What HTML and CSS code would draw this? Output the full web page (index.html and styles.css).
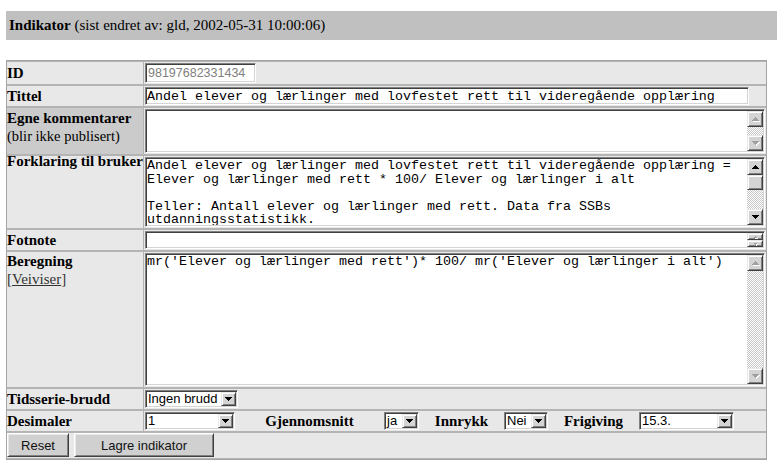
FILE: index.html
```html
<!DOCTYPE html>
<html lang="no">
<head>
<meta charset="utf-8">
<title>Indikator</title>
<link rel="stylesheet" href="styles.css">
</head>
<body>
<div class="titlebar"><b>Indikator</b> (sist endret av: gld, 2002-05-31 10:00:06)</div>
<form class="form">
<table class="grid">
  <colgroup><col class="c-label"><col class="c-field"></colgroup>
  <tr>
    <th>ID</th>
    <td><input class="txt txt-id" value="98197682331434" readonly></td>
  </tr>
  <tr>
    <th>Tittel</th>
    <td><input class="txt txt-title" value="Andel elever og lærlinger med lovfestet rett til videregående opplæring"></td>
  </tr>
  <tr>
    <th class="th-top th-dark">Egne kommentarer<br><span class="note">(blir ikke publisert)</span></th>
    <td>
      <div class="area h-egne">
        <textarea class="area-text"></textarea>
        <div class="sb sb-off">
          <span class="sb-btn"><svg class="arr" width="7" height="4" viewBox="0 0 7 4"><path d="M3 0h1v1h1v1h1v1h1v1H0V3h1V2h1V1h1z"/></svg></span>
          <span class="sb-track"></span>
          <span class="sb-btn"><svg class="arr" width="7" height="4" viewBox="0 0 7 4"><path d="M0 0h7v1H6v1H5v1H4v1H3V3H2V2H1V1H0z"/></svg></span>
        </div>
      </div>
    </td>
  </tr>
  <tr>
    <th class="th-top th-tight">Forklaring til bruker</th>
    <td>
      <div class="area h-forkl">
        <textarea class="area-text">Andel elever og lærlinger med lovfestet rett til videregående opplæring =
Elever og lærlinger med rett * 100/ Elever og lærlinger i alt

Teller: Antall elever og lærlinger med rett. Data fra SSBs
utdanningsstatistikk.</textarea>
        <div class="sb">
          <span class="sb-btn"><svg class="arr" width="7" height="4" viewBox="0 0 7 4"><path d="M3 0h1v1h1v1h1v1h1v1H0V3h1V2h1V1h1z"/></svg></span>
          <span class="sb-btn sb-thumb"></span>
          <span class="sb-track"></span>
          <span class="sb-btn"><svg class="arr" width="7" height="4" viewBox="0 0 7 4"><path d="M0 0h7v1H6v1H5v1H4v1H3V3H2V2H1V1H0z"/></svg></span>
        </div>
      </div>
    </td>
  </tr>
  <tr>
    <th>Fotnote</th>
    <td>
      <div class="area h-fot">
        <textarea class="area-text"></textarea>
        <div class="sb sb-off sb-mini">
          <span class="sb-btn"><svg class="arr" width="3" height="2" viewBox="0 0 3 2"><path d="M1 0h1v1h1v1H0V1h1z"/></svg></span>
          <span class="sb-btn"><svg class="arr" width="3" height="2" viewBox="0 0 3 2"><path d="M0 0h3v1H2v1H1V1H0z"/></svg></span>
        </div>
      </div>
    </td>
  </tr>
  <tr>
    <th class="th-top th-bereg">Beregning<br><span class="link-wrap">[<a class="link" href="#">Veiviser</a>]</span></th>
    <td>
      <div class="area h-bereg">
        <textarea class="area-text">mr('Elever og lærlinger med rett')* 100/ mr('Elever og lærlinger i alt')</textarea>
        <div class="sb sb-off">
          <span class="sb-btn"><svg class="arr" width="7" height="4" viewBox="0 0 7 4"><path d="M3 0h1v1h1v1h1v1h1v1H0V3h1V2h1V1h1z"/></svg></span>
          <span class="sb-track"></span>
          <span class="sb-btn"><svg class="arr" width="7" height="4" viewBox="0 0 7 4"><path d="M0 0h7v1H6v1H5v1H4v1H3V3H2V2H1V1H0z"/></svg></span>
        </div>
      </div>
    </td>
  </tr>
  <tr>
    <th>Tidsserie-brudd</th>
    <td>
      <span class="sel w93"><span class="sel-val">Ingen brudd</span><span class="sel-btn"><svg class="arr" width="7" height="4" viewBox="0 0 7 4"><path d="M0 0h7v1H6v1H5v1H4v1H3V3H2V2H1V1H0z"/></svg></span></span>
    </td>
  </tr>
  <tr>
    <th>Desimaler</th>
    <td>
      <div class="opts">
        <span class="sel w90"><span class="sel-val">1</span><span class="sel-btn"><svg class="arr" width="7" height="4" viewBox="0 0 7 4"><path d="M0 0h7v1H6v1H5v1H4v1H3V3H2V2H1V1H0z"/></svg></span></span>
        <span class="opt-label w149">Gjennomsnitt</span>
        <span class="sel w35"><span class="sel-val">ja</span><span class="sel-btn"><svg class="arr" width="7" height="4" viewBox="0 0 7 4"><path d="M0 0h7v1H6v1H5v1H4v1H3V3H2V2H1V1H0z"/></svg></span></span>
        <span class="opt-label w85">Innrykk</span>
        <span class="sel w44"><span class="sel-val">Nei</span><span class="sel-btn"><svg class="arr" width="7" height="4" viewBox="0 0 7 4"><path d="M0 0h7v1H6v1H5v1H4v1H3V3H2V2H1V1H0z"/></svg></span></span>
        <span class="opt-label w91">Frigiving</span>
        <span class="sel w95"><span class="sel-val">15.3.</span><span class="sel-btn"><svg class="arr" width="7" height="4" viewBox="0 0 7 4"><path d="M0 0h7v1H6v1H5v1H4v1H3V3H2V2H1V1H0z"/></svg></span></span>
      </div>
    </td>
  </tr>
  <tr class="r-btn">
    <td colspan="2">
      <div class="btns">
        <button type="reset" class="btn w62">Reset</button>
        <button type="button" class="btn w140">Lagre indikator</button>
      </div>
    </td>
  </tr>
</table>
</form>
</body>
</html>
```
FILE: styles.css
```css
* { box-sizing: border-box; }
html, body { margin: 0; }
body {
  padding: 11px 0 0 6px;
  background: #fff;
  color: #000;
  font-family: "Liberation Serif", "Times New Roman", serif;
  font-size: 15px;
}

.titlebar {
  height: 29px;
  line-height: 29px;
  background: #c0c0c0;
  padding-left: 3px;
  white-space: nowrap;
}

.form { margin: 20px 0 0 0; }

.grid {
  width: 761px;
  table-layout: fixed;
  border-collapse: separate;
  border-spacing: 0;
  border: 1px solid #a4a4a4;
  background: #e8e8e8;
}
.c-label { width: 136px; }

.grid th,
.grid td {
  border-top: 1px solid #b4b4b4;
  border-bottom: 1px solid #b4b4b4;
}
.grid th {
  padding: 0;
  text-align: left;
  font-weight: bold;
  vertical-align: middle;
  white-space: nowrap;
  line-height: 17px;
}
.grid td {
  border-left: 1px solid #b4b4b4;
  padding: 1px;
  vertical-align: top;
  line-height: 0;
}

.th-top { vertical-align: top !important; }
.th-dark { background: #cbcbcb; padding-top: 1px !important; line-height: 18px !important; }
.th-tight { line-height: 11px !important; }
.th-bereg { line-height: 18px !important; }
.note { font-weight: normal; font-size: 14.5px; }
.link-wrap { font-weight: normal; color: #333; }
.link { color: #333; text-decoration: underline; }

/* text inputs */
.txt {
  display: block;
  margin: 0;
  border: 1px solid;
  border-color: #808080 #ffffff #ffffff #808080;
  box-shadow: inset 1px 1px 0 #404040, inset -1px -1px 0 #d4d4d4;
  background: #fff;
  outline: none;
}
.txt-id {
  width: 111px;
  height: 20px;
  padding: 0 2px;
  font-family: "Liberation Sans", Arial, sans-serif;
  font-size: 12.5px;
  color: #808080;
}
.txt-title {
  width: 604px;
  height: 18px;
  padding: 0 1px;
  font-family: "Liberation Mono", "Courier New", monospace;
  font-size: 13.333px;
  color: #000;
}

/* textareas with classic scrollbars */
.area {
  display: flex;
  width: 620px;
  border: 1px solid;
  border-color: #808080 #ffffff #ffffff #808080;
  box-shadow: inset 1px 1px 0 #404040, inset -1px -1px 0 #d4d4d4;
  background: #fff;
  padding: 1px;
}
.h-egne { height: 44px; }
.h-forkl { height: 70px; }
.h-fot { height: 18px; }
.h-bereg { height: 133px; }

.area-text {
  flex: 1;
  min-width: 0;
  margin: 0;
  border: 0;
  padding: 0;
  resize: none;
  overflow: hidden;
  outline: none;
  background: transparent;
  color: #000;
  font-family: "Liberation Mono", "Courier New", monospace;
  font-size: 13.333px;
  line-height: 13.5px;
}

.sb {
  width: 16px;
  display: flex;
  flex-direction: column;
  flex: none;
}
.sb-btn {
  height: 16px;
  flex: none;
  display: flex;
  align-items: center;
  justify-content: center;
  background: #d4d4d4;
  border: 1px solid;
  border-color: #e8e8e8 #404040 #404040 #e8e8e8;
  box-shadow: inset 1px 1px 0 #ffffff, inset -1px -1px 0 #808080;
  color: #000;
}
.sb-thumb { height: 15px; }
.sb-track {
  flex: 1;
  background-color: #ffffff;
  background-image: conic-gradient(#c8c8c8 25%, transparent 0 50%, #c8c8c8 0 75%, transparent 0);
  background-size: 2px 2px;
}
.sb-mini .sb-btn { height: 7px; }
.sb-off .sb-btn { color: #a0a0a0; }
.sb-off .arr { filter: drop-shadow(1px 1px 0 #ffffff); }

.arr {
  display: block;
  fill: currentColor;
  shape-rendering: crispEdges;
}

/* selects */
.sel {
  display: flex;
  align-items: center;
  flex: none;
  height: 18px;
  border: 1px solid;
  border-color: #808080 #ffffff #ffffff #808080;
  box-shadow: inset 1px 1px 0 #404040, inset -1px -1px 0 #d4d4d4;
  background: #fff;
  padding: 1px;
  font-family: "Liberation Sans", Arial, sans-serif;
  font-size: 13px;
  line-height: 14px;
}
.sel-val {
  flex: 1;
  min-width: 0;
  padding-left: 1px;
  white-space: nowrap;
  overflow: hidden;
}
.sel-btn {
  width: 15px;
  height: 14px;
  flex: none;
  display: flex;
  align-items: center;
  justify-content: center;
  background: #d4d4d4;
  border: 1px solid;
  border-color: #e8e8e8 #404040 #404040 #e8e8e8;
  box-shadow: inset 1px 1px 0 #ffffff, inset -1px -1px 0 #808080;
}
.w35 { width: 35px; }
.w44 { width: 44px; }
.w90 { width: 90px; }
.w93 { width: 93px; }
.w95 { width: 95px; }

.opts {
  display: flex;
  align-items: center;
  height: 18px;
}
.opt-label {
  flex: none;
  text-align: center;
  font-weight: bold;
  font-size: 15px;
  line-height: 18px;
  white-space: nowrap;
}
.w85 { width: 85px; }
.w91 { width: 91px; }
.w149 { width: 149px; }

/* buttons row */
.r-btn td {
  border-left: 0;
  padding: 0 0 1px 0;
}
.btns {
  display: flex;
  gap: 5px;
}
.btn {
  height: 24px;
  margin: 0;
  padding: 0;
  background: #d0d0d0;
  border: 1px solid;
  border-color: #ffffff #404040 #404040 #ffffff;
  box-shadow: inset 1px 1px 0 #e8e8e8, inset -1px -1px 0 #808080;
  font-family: "Liberation Sans", Arial, sans-serif;
  font-size: 13px;
  color: #111;
}
.w62 { width: 62px; }
.w140 { width: 140px; }
```
